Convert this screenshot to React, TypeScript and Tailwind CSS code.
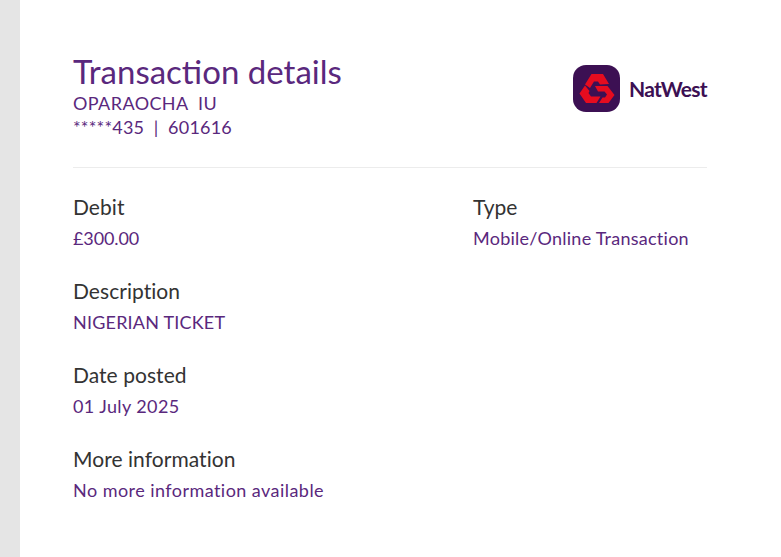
import React from "react";

const sans = "font-['Lato','Open_Sans',sans-serif]";

const NatWestLogo = () => (
  <div className="flex items-center gap-[9px]">
    <svg width="47" height="47" viewBox="0 0 47 47">
      <rect width="47" height="47" rx="13" fill="#3c1053" />
      <path d="M12 19.5 L18.5 9 L30 9 L36 19 L27 19.5 L25 16.5 L21 16.5 L17 23 Z" fill="#e60c1f" />
      <path d="M6.5 28.5 L12 20.5 L16.5 26 L15.5 28 L18 31.5 L27.5 31.5 L23.5 38 L13 38 Z" fill="#e60c1f" />
      <path d="M22 21 L34.5 21 L41.5 30 L35.5 38 L26 38 L29.5 32.5 L32 32.5 L34 29.5 L31.5 26.5 L25 26.5 Z" fill="#e60c1f" />
    </svg>
    <span className={`${sans} text-[21px] font-bold tracking-[-0.7px] text-[#3c1053]`}>NatWest</span>
  </div>
);

const Field = ({ label, value, tracking }: { label: string; value: string; tracking: string }) => (
  <div className="flex h-[84px] flex-col">
    <span className={`${sans} text-[21px] leading-[28px] tracking-[0.05px] text-[#333333]`}>{label}</span>
    <span className={`${sans} mt-[3px] text-[18px] leading-[28px] ${tracking} text-[#5a287d]`}>{value}</span>
  </div>
);

export default function App() {
  return (
    <div className="flex h-[557px] w-[781px] overflow-hidden bg-white">
      <div className="w-[20px] shrink-0 bg-[#e5e5e5]" />
      <div className="flex-1 pl-[53px] pr-[74px] pt-[51px]">
        <div className="flex items-start justify-between border-b border-[#ececec] pb-[28px]">
          <div className="flex flex-col">
            <h1 className={`${sans} text-[33px] leading-[40px] text-[#5a287d]`}>Transaction details</h1>
            <span className={`${sans} mt-[1px] text-[18px] leading-[23px] tracking-[0.4px] text-[#5a287d]`}>OPARAOCHA&nbsp; IU</span>
            <span className={`${sans} text-[18px] leading-[24px] tracking-[0.2px] text-[#5a287d]`}>*****435&nbsp; |&nbsp; 601616</span>
          </div>
          <div className="mt-[14px]">
            <NatWestLogo />
          </div>
        </div>
        <div className="mt-[25px] grid grid-cols-[400px_1fr]">
          <div className="flex flex-col">
            <Field label="Debit" value="£300.00" tracking="tracking-[-0.1px]" />
            <Field label="Description" value="NIGERIAN TICKET" tracking="tracking-[0.2px]" />
            <Field label="Date posted" value="01 July 2025" tracking="tracking-[0.4px]" />
            <Field label="More information" value="No more information available" tracking="tracking-[0.45px]" />
          </div>
          <div className="flex flex-col">
            <Field label="Type" value="Mobile/Online Transaction" tracking="tracking-[0.25px]" />
          </div>
        </div>
      </div>
    </div>
  );
}
